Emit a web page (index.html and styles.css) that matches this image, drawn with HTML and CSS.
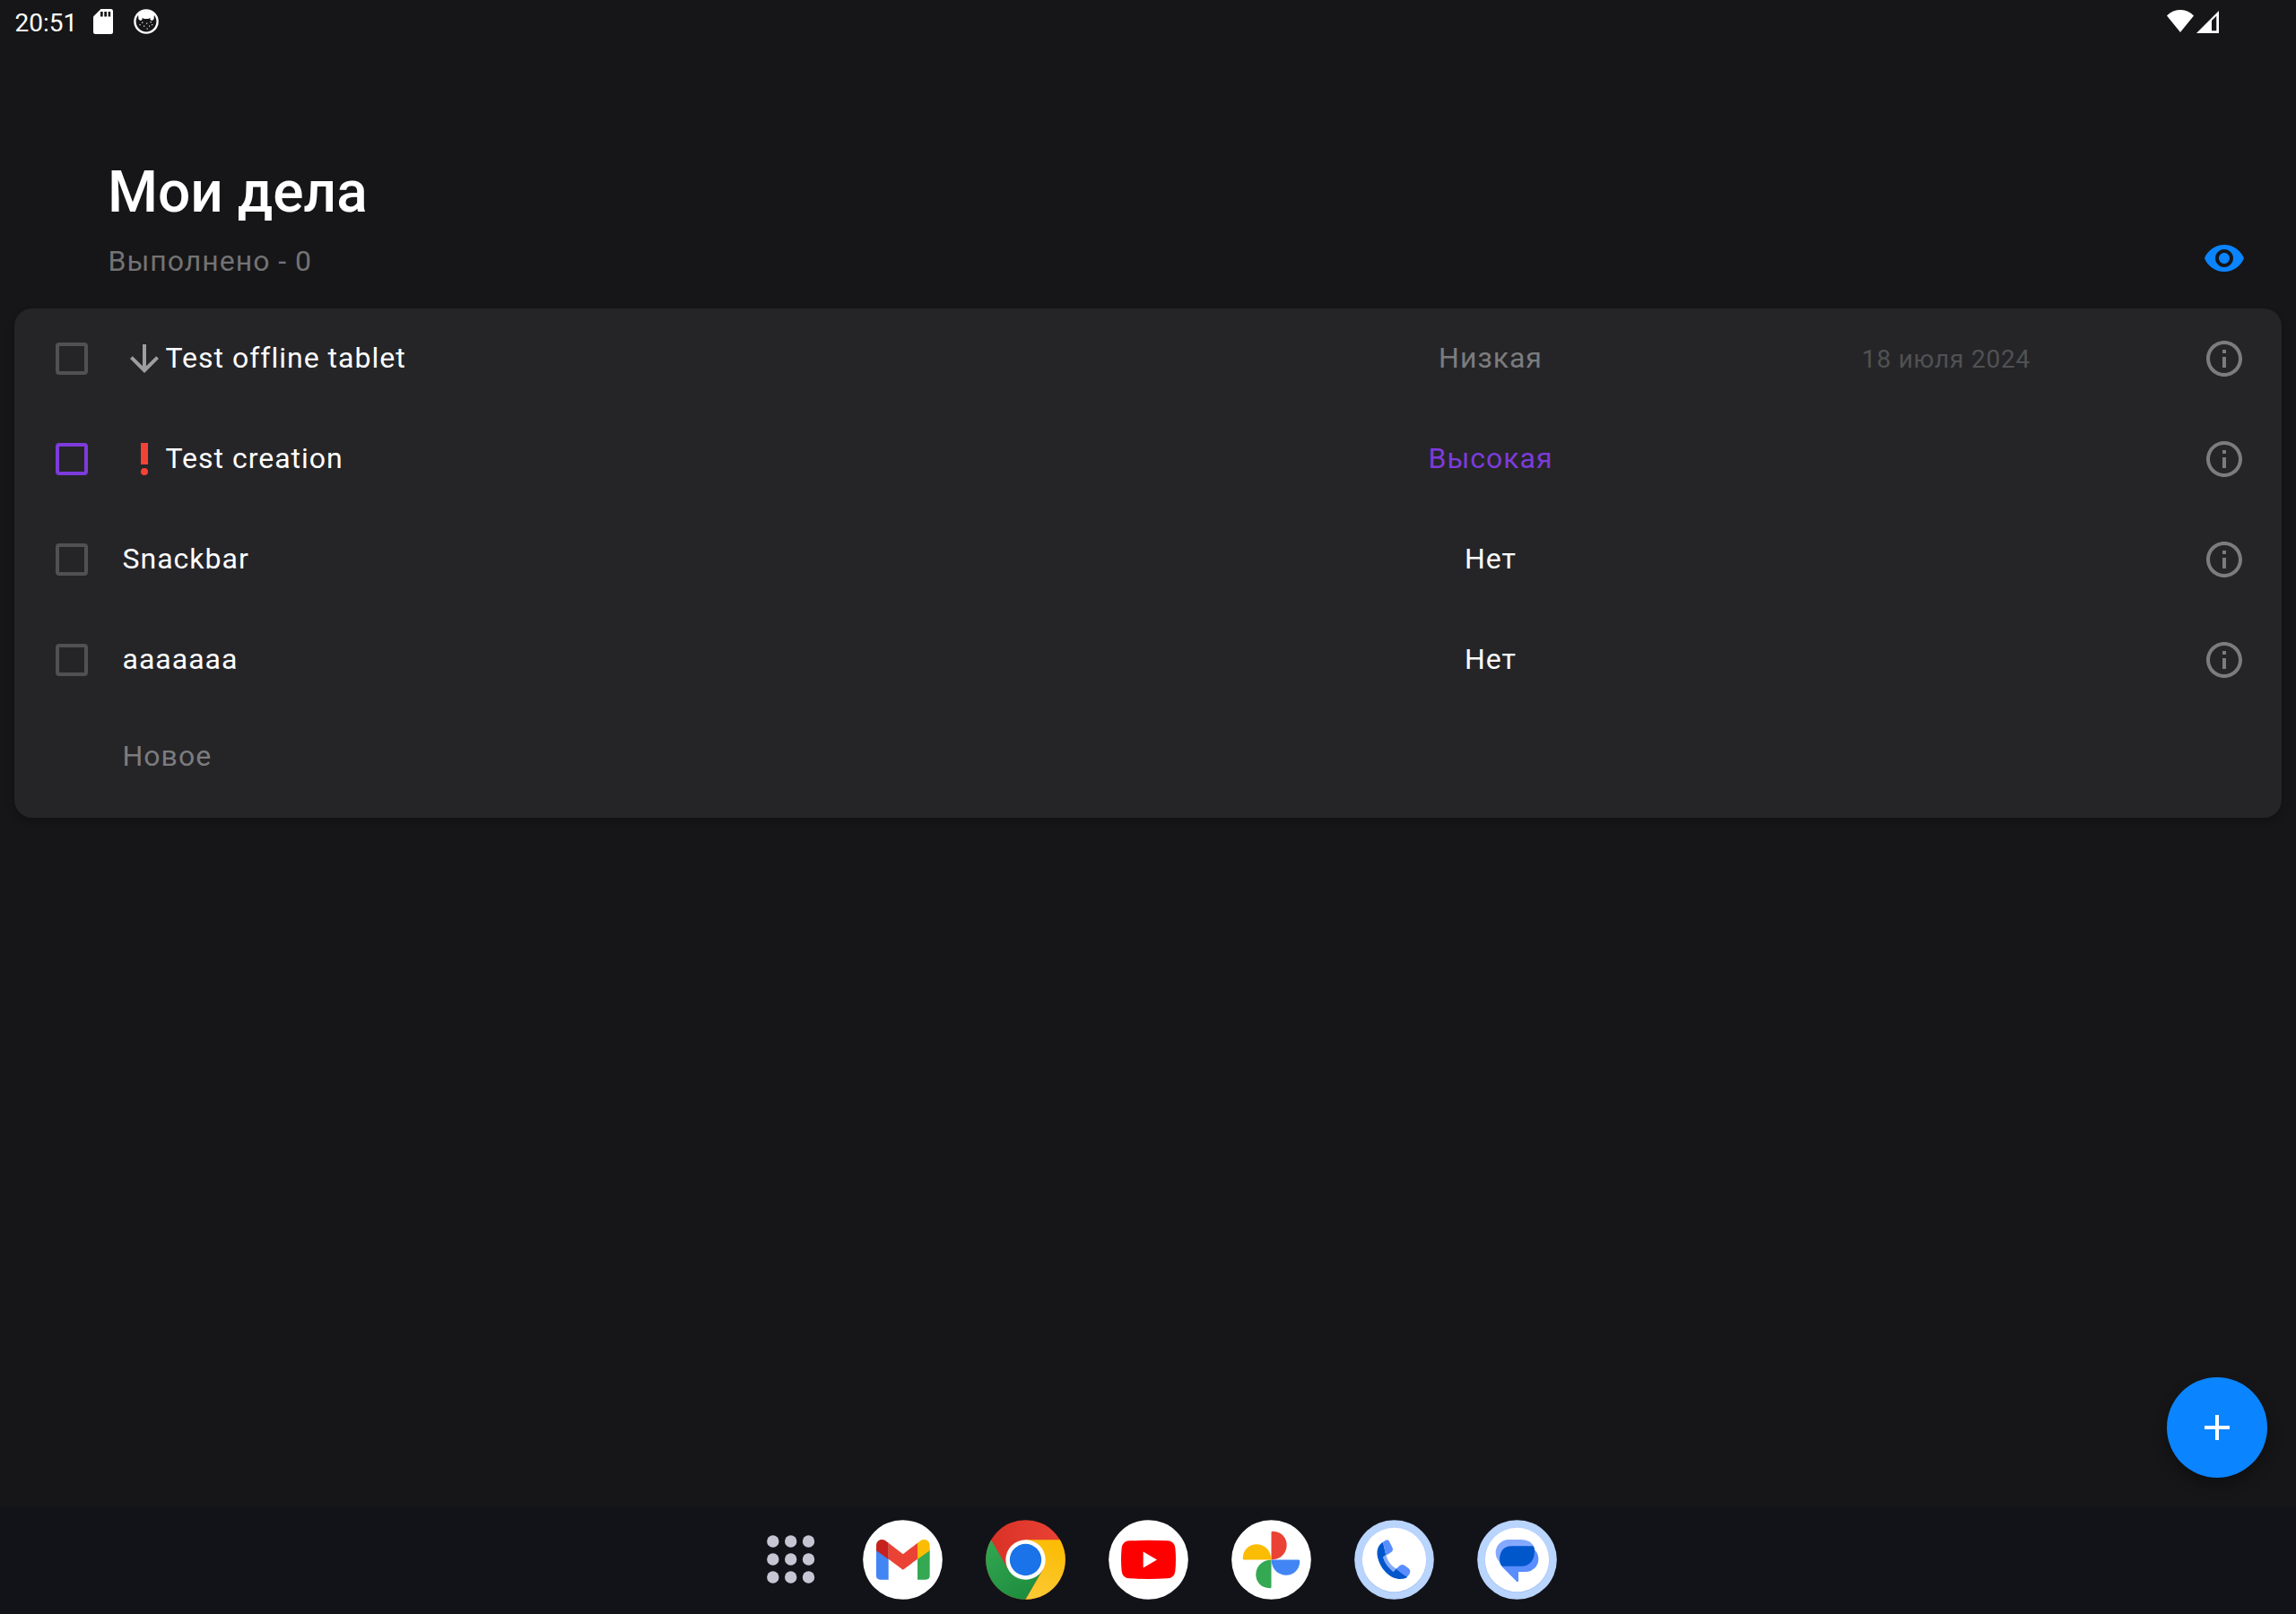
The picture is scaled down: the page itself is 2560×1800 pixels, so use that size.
FILE: index.html
```html
<!DOCTYPE html>
<html lang="ru">
<head>
<meta charset="utf-8">
<title>Мои дела</title>
<link rel="stylesheet" href="styles.css">
</head>
<body>
<svg class="defs" width="0" height="0">
  <symbol id="info" viewBox="0 0 24 24"><path d="M11 7h2v2h-2zm0 4h2v6h-2zm1-9C6.48 2 2 6.48 2 12s4.48 10 10 10 10-4.48 10-10S17.52 2 12 2zm0 18c-4.41 0-8-3.59-8-8s3.59-8 8-8 8 3.59 8 8-3.59 8-8 8z"/></symbol>
</svg>
<div class="screen">
  <div class="status">
    <span class="clock">20:51</span>
    <svg class="sd" width="22" height="28" viewBox="0 0 22 28"><path fill="#fff" d="M8.500 0H19.500A2.500 2.500 0 0 1 22 2.500V25.500A2.500 2.500 0 0 1 19.500 28H2.500A2.500 2.500 0 0 1 0 25.500V8.500Z"/><path fill="#161618" d="M8 3h2.700v5.500H8zM12.300 3H15v5.500h-2.700zM16.600 3h2.600v5.500h-2.600z"/></svg>
    <svg class="cat" width="28" height="28" viewBox="0 0 28 28"><circle cx="14" cy="14" r="12.600" fill="none" stroke="#fff" stroke-width="2.400"/><path fill="#fff" d="M5 6C7.500 3 10 2 14 2s6.500 1 9 4L22.500 11.500 20.500 13 18.500 12 18.300 9.800 16.500 11h-5L9.700 9.800 9.500 12 7.500 13 5.500 11.500z"/><path fill="#ddd" d="M9 14.500h1.300v1.300H9zM14 15.500h1.300v1.300H14zM18.500 14h1.300v1.300h-1.300zM6.500 17h1.200v1.200H6.500zM11 18.500h1.300v1.300H11zM17 18.500h1.200v1.200H17zM20 17h1.200v1.200H20zM14.500 21.500h1.300v1.300h-1.300z"/></svg>
    <svg class="wifi" width="30" height="25" viewBox="0 0 30 25"><path fill="#fff" d="M0 6.500C8.500-2.200 21.500-2.200 30 6.500L15 25Z"/></svg>
    <svg class="signal" width="25" height="25" viewBox="0 0 25 25"><path fill="#fff" fill-rule="evenodd" d="M0 25L25 0V25ZM17 11V22.300H22.300V5.700Z"/></svg>
  </div>

  <header class="header">
    <div>
      <h1>Мои дела</h1>
      <p class="done">Выполнено - 0</p>
    </div>
    <svg class="eye" width="48" height="48" viewBox="0 0 24 24"><path d="M12 4.500C7 4.500 2.730 7.610 1 12c1.730 4.390 6 7.500 11 7.500s9.270-3.110 11-7.500c-1.730-4.390-6-7.500-11-7.500zM12 17c-2.760 0-5-2.240-5-5s2.240-5 5-5 5 2.240 5 5-2.240 5-5 5zm0-8c-1.660 0-3 1.340-3 3s1.340 3 3 3 3-1.340 3-3-1.340-3-3-3z"/></svg>
  </header>

  <main class="card">
    <div class="row">
      <span class="check"></span>
      <span class="task"><svg class="low-icon" width="48" height="48" viewBox="0 0 24 24"><path d="M20 12l-1.410-1.410L13 16.170V4h-2v12.170l-5.580-5.590L4 12l8 8 8-8z"/></svg><span class="label">Test offline tablet</span></span>
      <span class="priority low">Низкая</span>
      <span class="date">18 июля 2024</span>
      <svg class="info"><use href="#info"/></svg>
    </div>
    <div class="row">
      <span class="check important"></span>
      <span class="task"><svg class="high-icon" width="48" height="48" viewBox="0 0 24 24"><circle cx="12" cy="19" r="2"/><path d="M10 3h4v12h-4z"/></svg><span class="label">Test creation</span></span>
      <span class="priority high">Высокая</span>
      <span class="date"></span>
      <svg class="info"><use href="#info"/></svg>
    </div>
    <div class="row">
      <span class="check"></span>
      <span class="task"><span class="label">Snackbar</span></span>
      <span class="priority">Нет</span>
      <span class="date"></span>
      <svg class="info"><use href="#info"/></svg>
    </div>
    <div class="row">
      <span class="check"></span>
      <span class="task"><span class="label">aaaaaaa</span></span>
      <span class="priority">Нет</span>
      <span class="date"></span>
      <svg class="info"><use href="#info"/></svg>
    </div>
    <div class="new">Новое</div>
  </main>

  <div class="fab"><svg width="48" height="48" viewBox="0 0 24 24"><path fill="#fff" d="M19 13h-6v6h-2v-6H5v-2h6V5h2v6h6v2z"/></svg></div>

  <nav class="taskbar">
    <svg class="apps" width="54" height="54" viewBox="0 0 54 54" fill="#c6c5d3"><circle cx="6.800" cy="7" r="6.700"/><circle cx="26.700" cy="7" r="6.700"/><circle cx="46.500" cy="7" r="6.700"/><circle cx="6.800" cy="27" r="6.700"/><circle cx="26.700" cy="27" r="6.700"/><circle cx="46.500" cy="27" r="6.700"/><circle cx="6.800" cy="47" r="6.700"/><circle cx="26.700" cy="47" r="6.700"/><circle cx="46.500" cy="47" r="6.700"/></svg>
    <svg class="app" viewBox="0 0 267 267">
      <circle cx="133.500" cy="133.500" r="133" fill="#fff"/>
      <path fill="#4285f4" d="M45 100L86 128V200H58Q45 200 45 187Z"/>
      <path fill="#34a853" d="M224 100L183 128V200H211Q224 200 224 187Z"/>
      <path fill="#ea4335" d="M86 77L134.500 115L183 77V131L134.500 167L86 131Z"/>
      <path fill="#c5221f" d="M45 103V86C45 68 63 61 76 70L86 77V132Z"/>
      <path fill="#fbbc04" d="M224 103V86C224 68 206 61 193 70L183 77V132Z"/>
    </svg>
    <svg class="app" viewBox="0 0 267 267">
      <defs>
        <linearGradient id="cr" x1="0" x2="1"><stop offset="0" stop-color="#d93025"/><stop offset="1" stop-color="#ea4335"/></linearGradient>
        <linearGradient id="cg" x1="0" y1="0" x2=".6" y2="1"><stop offset="0" stop-color="#34a853"/><stop offset="1" stop-color="#1e8e3e"/></linearGradient>
        <linearGradient id="cy" x1=".3" y1="1" x2=".6" y2="0"><stop offset="0" stop-color="#fcc934"/><stop offset="1" stop-color="#fbbc04"/></linearGradient>
      </defs>
      <circle cx="133.500" cy="133.500" r="133" fill="url(#cr)"/>
      <path fill="url(#cg)" d="M18.300 67L76 167L133.500 133.500L191 167L133.500 266.500A133 133 0 0 1 18.300 67Z"/>
      <path fill="url(#cy)" d="M248.700 67H133.500V133.500L191 167L133.500 266.500A133 133 0 0 0 248.700 67Z"/>
      <circle cx="133.500" cy="133.500" r="66.500" fill="#fff"/>
      <circle cx="133.500" cy="133.500" r="53" fill="#1a73e8"/>
    </svg>
    <svg class="app" viewBox="0 0 267 267">
      <circle cx="133.500" cy="133.500" r="133" fill="#fff"/>
      <path fill="#f00" d="M70 70Q133.500 67 197 70Q220 71 223 94Q227 133 223 172Q220 195 197 196Q133.500 200 70 196Q47 195 44 172Q40 133 44 94Q47 71 70 70Z"/>
      <path fill="#fff" d="M116 106.500L162 133.500L116 160.500Z"/>
    </svg>
    <svg class="app" viewBox="0 0 267 267">
      <circle cx="133.500" cy="133.500" r="133" fill="#fff"/>
      <path fill="#ea4335" d="M133.500 133.500V42Q133.500 38 138 38C202 40 201 131 133.500 133.500Z"/>
      <path fill="#4285f4" d="M133.500 133.500H225Q229 133.500 229 138C227 202 136 201 133.500 133.500Z"/>
      <path fill="#34a853" d="M133.500 133.500V225Q133.500 229 129 229C65 227 66 136 133.500 133.500Z"/>
      <path fill="#fbbc04" d="M133.500 133.500H42Q38 133.500 38 129C40 65 131 66 133.500 133.500Z"/>
    </svg>
    <svg class="app" viewBox="0 0 267 267">
      <circle cx="133.500" cy="133.500" r="133" fill="#b9d4fd"/>
      <circle cx="133.500" cy="136" r="108" fill="#a9c6f4"/>
      <circle cx="133.500" cy="133.500" r="107" fill="#fff"/>
      <path fill="#0057cc" d="M96 74C78 84 73 105 79 128C88 165 120 198 155 198Q168 198 178 192L142 163L130 173C115 160 103 145 97 125L106 118Z"/>
      <path fill="#85a9ff" d="M96 124L106 117C112 140 124 155 142 164L130 173C115 160 101 145 96 124Z"/>
      <path fill="#5a8dff" d="M96 74L104 69Q112 64 117 72L128 94Q131 102 125 107L106 119Z"/>
      <path fill="#5a8dff" d="M140 164L152 153Q160 147 168 152L182 163Q190 170 185 180Q181 188 174 193Z"/>
      <path fill="#0057cc" d="M140 164L145 171L176 191L166 196L130 180Z"/>
    </svg>
    <svg class="app" viewBox="0 0 267 267">
      <circle cx="133.500" cy="133.500" r="133" fill="#b9d4fd"/>
      <circle cx="133.500" cy="136" r="108" fill="#a9c6f4"/>
      <circle cx="133.500" cy="133.500" r="107" fill="#fff"/>
      <path fill="#85a9ff" d="M106 66H148Q182 66 192 96V120L90 152Q62 136 62 110A44 44 0 0 1 106 66Z"/>
      <path fill="#5a8dff" d="M75 140L118 88H162A43 43 0 0 1 162 174H138V205Q137 209 133 207L86 160Q76 150 75 140Z"/>
      <path fill="#0057cc" d="M114 88H188Q192 94 192 104C192 134 176 155 148 155H84Q75 146 75 132C75 106 90 88 114 88Z"/>
    </svg>
  </nav>
</div>
</body>
</html>
```
FILE: styles.css
```css
* { box-sizing: border-box; }

body {
  margin: 0;
  background: #161618;
  color: #fff;
  font-family: Roboto, "Liberation Sans", sans-serif;
}

svg { display: block; flex: none; }
.defs { position: absolute; }

.screen {
  width: 2560px;
  height: 1800px;
  display: flex;
  flex-direction: column;
}

.status {
  height: 50px;
  padding: 0 86px 0 16px;
  display: flex;
  align-items: center;
}

.clock {
  width: 88px;
  padding: 2px 0 0 .5px;
  font-size: 28px;
  line-height: 34px;
}

.sd { margin-top: -2px; }
.cat { margin: -2px 0 0 23px; }
.wifi { margin: -3px 0 0 auto; }
.signal { margin: -1px 0 0 3px; }

.header {
  height: 294px;
  padding: 126px 56px 32px 120px;
  display: flex;
  align-items: flex-end;
  justify-content: space-between;
}

h1 {
  margin: 0;
  font-size: 64px;
  font-weight: 500;
  line-height: 76px;
}

.done {
  margin: 19px 0 2px;
  padding-left: .5px;
  color: #737374;
  font-size: 32px;
  line-height: 38px;
  letter-spacing: 1px;
}

.eye { fill: #0a84ff; }

.card {
  height: 568px;
  margin: 0 16px;
  background: #252528;
  border-radius: 20px;
  box-shadow: 0 4px 8px rgba(0, 0, 0, .22);
  font-size: 32px;
  line-height: 38px;
  letter-spacing: 1px;
}

.row {
  height: 112px;
  padding: 0 40px 0 46px;
  display: grid;
  grid-template-columns: 74px 1271px 508px 541px 48px;
  align-items: center;
}

.check {
  width: 36px;
  height: 36px;
  border: 4px solid #515153;
  border-radius: 4px;
}

.check.important { border-color: #7d3bdb; }

.task { padding-left: .5px; display: flex; align-items: center; }
.label, .priority { padding-bottom: 2px; }
.low-icon { fill: #9e9e9e; }
.high-icon { fill: #f44336; }

.priority { padding-left: 2px; text-align: center; }
.low { color: #7c7c7e; }
.high { color: #7d3bdb; }

.date {
  padding: 2px 31px 0 0;
  color: #515153;
  font-size: 28px;
  letter-spacing: .8px;
  text-align: center;
}

.info { width: 48px; height: 48px; fill: #7c7c7e; }

.new {
  padding: 32px 0 0 120.5px;
  color: #7c7c7e;
}

.fab {
  width: 112px;
  height: 112px;
  margin: auto 32px 32px auto;
  display: flex;
  align-items: center;
  justify-content: center;
  background: #0a84ff;
  border-radius: 50%;
  box-shadow: 0 8px 16px rgba(0, 0, 0, .3);
}

.taskbar {
  height: 120px;
  padding: 0 0 1px 31px;
  display: flex;
  align-items: center;
  justify-content: center;
  gap: 48px;
  background: #121318;
}

.apps { margin: -1px 5px 0 0; }
.app { width: 89px; height: 89px; }
```
